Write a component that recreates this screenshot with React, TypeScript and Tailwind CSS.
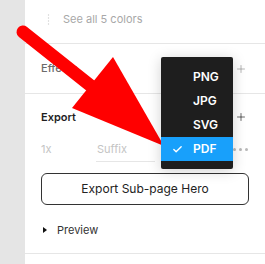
import { Check, Plus } from 'lucide-react'

const formats = ['PNG', 'JPG', 'SVG', 'PDF']

function FormatMenu({ selected }: { selected: string }) {
  return (
    <div className="absolute left-[161px] top-[57px] w-[72px] rounded-[2px] bg-[#1e1e1e] py-[8px] shadow-[0_2px_14px_rgba(0,0,0,0.18)]">
      {formats.map((f) => (
        <div
          key={f}
          className={
            f === selected
              ? 'flex h-[24px] items-center bg-[#18a0fb] text-white'
              : 'flex h-[24px] items-center text-white'
          }
        >
          <div className="flex w-[32px] justify-center pl-[1px]">
            {f === selected ? <Check className="h-[11px] w-[11px]" strokeWidth={3} /> : null}
          </div>
          <span className="text-[12px] font-semibold leading-none">{f}</span>
        </div>
      ))}
    </div>
  )
}

function Arrow() {
  return (
    <svg className="pointer-events-none absolute left-0 top-0" width="265" height="264" viewBox="0 0 265 264">
      <line x1="23" y1="32" x2="96" y2="90" stroke="#ff0000" strokeWidth="13" strokeLinecap="round" />
      <polygon points="113,57 72,108 164,146" fill="#ff0000" />
    </svg>
  )
}

export default function App() {
  return (
    <div className="relative flex h-[264px] w-[265px] overflow-hidden bg-white font-['Inter',sans-serif]">
      <div className="w-[25px] shrink-0 bg-[#e5e5e5]" />

      <div className="flex flex-1 flex-col bg-white">
        {/* styles */}
        <div className="h-[44px] border-b border-[#e6e6e6]">
          <div className="flex h-[38px] items-center pl-[22px]">
            <svg width="3" height="11" viewBox="0 0 3 11" className="shrink-0">
              <circle cx="1.5" cy="1" r="0.7" fill="#d0d0d0" />
              <circle cx="1.5" cy="4" r="0.7" fill="#d0d0d0" />
              <circle cx="1.5" cy="7" r="0.7" fill="#d0d0d0" />
              <circle cx="1.5" cy="10" r="0.7" fill="#d0d0d0" />
            </svg>
            <span className="ml-[13px] text-[11px] text-[#a8a8a8]">See all 5 colors</span>
          </div>
        </div>

        {/* effects */}
        <div className="flex h-[50px] items-center justify-between border-b border-[#e6e6e6] pl-4 pr-[18px]">
          <span className="text-[11px] font-medium text-[#6b6b6b]">Effects</span>
          <Plus className="h-[12px] w-[12px] text-[#8c8c8c]" strokeWidth={1.25} />
        </div>

        {/* export */}
        <div className="flex flex-col border-b border-[#e6e6e6] px-4 pb-[14px]">
          <div className="flex h-[46px] items-center justify-between pr-[2px]">
            <span className="text-[11px] font-semibold text-[#1f1f1f]">Export</span>
            <Plus className="h-[12px] w-[12px] text-[#111]" strokeWidth={1.25} />
          </div>
          <div className="flex h-[22px] items-start text-[11px] leading-[18px] text-[#c4c4c4]">
            <span className="w-[55px]">1x</span>
            <div className="h-[22px] w-[59px] border-b border-[#e6e6e6] pl-[1px]">Suffix</div>
            <div className="ml-auto mr-[1px] flex h-[18px] items-center gap-[3px]">
              <span className="h-[3px] w-[3px] rounded-full bg-[#b8b8b8]" />
              <span className="h-[3px] w-[3px] rounded-full bg-[#b8b8b8]" />
              <span className="h-[3px] w-[3px] rounded-full bg-[#b8b8b8]" />
            </div>
          </div>
          <button
            type="button"
            className="mt-[11px] flex h-[32px] items-center justify-center rounded-[6px] border border-[#333] text-[12px] text-[#222]"
          >
            Export Sub-page Hero
          </button>
          <div className="mt-[16px] flex h-[18px] items-center">
            <svg width="4" height="6" viewBox="0 0 4 6" className="ml-[2px]">
              <polygon points="0,0 4,3 0,6" fill="#111" />
            </svg>
            <span className="ml-[10px] text-[11px] text-[#333]">Preview</span>
          </div>
        </div>
      </div>

      <Arrow />
      <FormatMenu selected="PDF" />
    </div>
  )
}
